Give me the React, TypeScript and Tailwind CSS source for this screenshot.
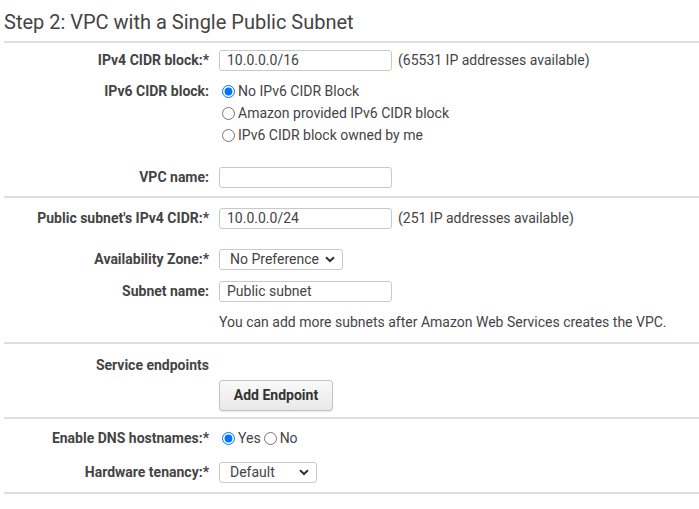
import * as React from 'react';

const Label = ({ children }: { children: React.ReactNode }) => (
  <div className="w-[205px] shrink-0 text-right font-bold">{children}</div>
);

const TextBox = ({ value }: { value?: string }) => (
  <input
    readOnly
    value={value ?? ''}
    className="h-[21px] w-[173px] rounded-[3px] border border-[#c9c9c9] bg-white px-[7px] text-[14px] text-[#444] outline-none"
  />
);

const Chevron = () => (
  <svg width="10" height="7" viewBox="0 0 10 7" className="shrink-0">
    <path d="M1 1.2 L5 5 L9 1.2" fill="none" stroke="#333" strokeWidth="2" />
  </svg>
);

const Select = ({ value, width }: { value: string; width: string }) => (
  <div
    className={`flex h-[21px] items-center justify-between rounded-[3px] border border-[#c9c9c9] bg-white pl-[10px] pr-[7px] ${width}`}
  >
    <span>{value}</span>
    <Chevron />
  </div>
);

const Radio = ({ checked, name }: { checked?: boolean; name: string }) => (
  <input type="radio" name={name} defaultChecked={checked} className="m-0 mx-[3px] h-[13px] w-[13px]" />
);

const Row = ({ label, className, children }: { label?: React.ReactNode; className: string; children?: React.ReactNode }) => (
  <div className={`flex items-center gap-[10px] ${className}`}>
    <Label>{label}</Label>
    <div className="flex items-center">{children}</div>
  </div>
);

const Rule = () => <div className="h-[2px] bg-[#dfdfdf]" />;

export default function App() {
  return (
    <div className="h-[509px] w-[699px] bg-white pl-[4px] text-[14px] text-[#444]" style={{ fontFamily: 'Roboto, "Liberation Sans", sans-serif' }}>
      <div className="flex h-[41px] items-center pt-[2px] text-[20px] text-[#444]">Step 2: VPC with a Single Public Subnet</div>
      <Rule />

      <Row label="IPv4 CIDR block:*" className="mt-[7px] h-[21px]">
        <TextBox value="10.0.0.0/16" />
        <span className="ml-[6px]">(65531 IP addresses available)</span>
      </Row>

      <div className="mt-[9px] flex gap-[10px]">
        <div className="flex h-[22px] w-[205px] shrink-0 items-center justify-end font-bold">IPv6 CIDR block:</div>
        <div className="flex flex-col">
          <label className="flex h-[22px] items-center">
            <Radio name="ipv6" checked />
            No IPv6 CIDR Block
          </label>
          <label className="flex h-[22px] items-center">
            <Radio name="ipv6" />
            Amazon provided IPv6 CIDR block
          </label>
          <label className="flex h-[22px] items-center">
            <Radio name="ipv6" />
            IPv6 CIDR block owned by me
          </label>
        </div>
      </div>

      <Row label="VPC name:" className="mt-[21px] h-[21px]">
        <TextBox />
      </Row>
      <div className="mt-[8px]">
        <Rule />
      </div>

      <Row label="Public subnet's IPv4 CIDR:*" className="mt-[10px] h-[21px]">
        <TextBox value="10.0.0.0/24" />
        <span className="ml-[6px]">(251 IP addresses available)</span>
      </Row>

      <Row label="Availability Zone:*" className="mt-[20px] h-[21px]">
        <Select value="No Preference" width="w-[124px]" />
      </Row>

      <Row label="Subnet name:" className="mt-[11px] h-[21px]">
        <TextBox value="Public subnet" />
      </Row>

      <Row className="mt-[10px] h-[21px]">
        <span>You can add more subnets after Amazon Web Services creates the VPC.</span>
      </Row>
      <div className="mt-[9px]">
        <Rule />
      </div>

      <Row label="Service endpoints" className="mt-[11px] h-[20px]" />
      <Row className="mt-[5px] h-[31px]">
        <button className="h-[31px] w-[114px] rounded-[3px] border border-[#c3c3c3] bg-gradient-to-b from-[#fafafa] to-[#e8e8e8] font-bold text-[#333] shadow-[0_1px_1px_rgba(0,0,0,0.08)]">
          Add Endpoint
        </button>
      </Row>
      <div className="mt-[6px]">
        <Rule />
      </div>

      <Row label="Enable DNS hostnames:*" className="mt-[9px] h-[20px]">
        <label className="flex items-center">
          <Radio name="dns" checked />
          Yes
        </label>
        <label className="flex items-center">
          <Radio name="dns" />
          No
        </label>
      </Row>

      <Row label="Hardware tenancy:*" className="mt-[14px] h-[21px]">
        <Select value="Default" width="w-[98px]" />
      </Row>
      <div className="mt-[9px]">
        <Rule />
      </div>
    </div>
  );
}
